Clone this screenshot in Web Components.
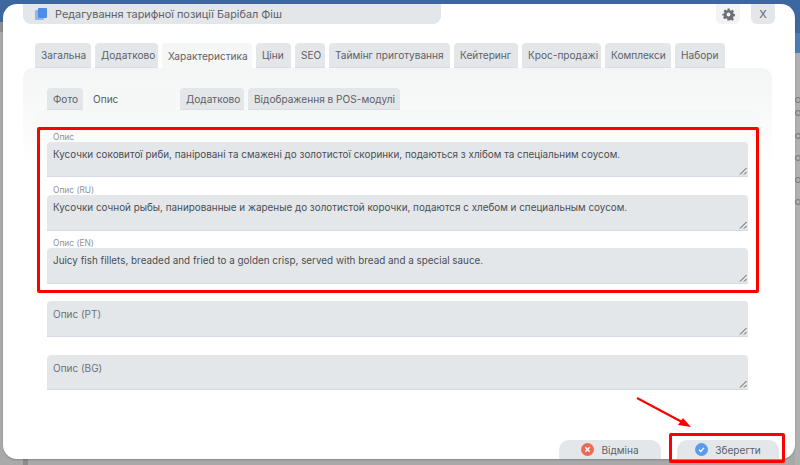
<!DOCTYPE html>
<html>
<head>
<meta charset="utf-8">
<style>
    html, body { margin: 0; height: 465px; overflow: hidden; }
    body { font-family: "Inter", "Liberation Sans", sans-serif; }
</style>
</head>
<body>
<edit-dialog></edit-dialog>

<script>
class TabButton extends HTMLElement {
    connectedCallback() {
        this.attachShadow({ mode: 'open' });
        this.shadowRoot.innerHTML = `
            <style>
                :host {
                    display: flex;
                    box-sizing: border-box;
                    align-items: center;
                    padding: 0 6px;
                    background: #e4e7ea;
                    border-bottom: 1px solid #d8dee4;
                    border-radius: 4px 4px 0 0;
                    color: #5d6168;
                    font-size: 10.1px;
                    white-space: nowrap;
                }
                :host([active]) {
                    background: #f5f6f6;
                    border-bottom: 0;
                }
            </style>
            <slot></slot>
        `;
    }
}

class DescField extends HTMLElement {
    connectedCallback() {
        this.attachShadow({ mode: 'open' });
        const label = this.getAttribute('label');
        const value = this.getAttribute('value');
        this.shadowRoot.innerHTML = `
            <style>
                :host { display: block; }
                .small {
                    height: 11px;
                    padding-left: 6px;
                    font-size: 8.4px;
                    line-height: 12px;
                    color: #8d9196;
                }
                .box {
                    position: relative;
                    box-sizing: border-box;
                    height: var(--box-h, 36px);
                    padding: 6px 6px;
                    background: #e4e7ea;
                    border-bottom: 1px solid #d3dae2;
                    border-radius: 4px 4px 0 0;
                    font-size: 9.9px;
                    line-height: 13px;
                    color: #4a4e54;
                }
                .box.empty { padding-top: 7px; font-size: 10px; color: #6c7076; }
                svg { position: absolute; right: 1px; bottom: 1px; }
            </style>
            ${value ? `<div class="small">${label}</div>` : ''}
            <div class="box ${value ? '' : 'empty'}">
                ${value || label}
                <svg width="8" height="8" viewBox="0 0 8 8" fill="none" stroke="#555" stroke-width="1">
                    <path d="M1 7.5 L7.5 1 M5 7.5 L7.5 5"/>
                </svg>
            </div>
        `;
    }
}

class FootButton extends HTMLElement {
    connectedCallback() {
        this.attachShadow({ mode: 'open' });
        this.shadowRoot.innerHTML = `
            <style>
                :host {
                    display: flex;
                    box-sizing: border-box;
                    width: 102px;
                    height: 19px;
                    align-items: center;
                    justify-content: center;
                    gap: 7px;
                    background: #e4e7ea;
                    border-radius: 10px 10px 0 0;
                    color: #5d6168;
                    font-size: 10.1px;
                }
                ::slotted(svg) { display: block; }
            </style>
            <slot name="icon"></slot>
            <slot></slot>
        `;
    }
}

class EditDialog extends HTMLElement {
    connectedCallback() {
        this.attachShadow({ mode: 'open' });
        this.shadowRoot.innerHTML = `
            <style>
                :host {
                    display: block;
                    position: relative;
                    width: 800px;
                    height: 465px;
                    overflow: hidden;
                    background: #a9a9a9;
                }
                /* page behind the modal, only its edges show */
                .back { position: absolute; }
                .dot {
                    position: absolute;
                    left: 795px;
                    width: 6px;
                    height: 6px;
                    box-sizing: border-box;
                    border: 1px solid #77736c;
                    border-radius: 50%;
                }
                .outer { position: relative; padding-top: 4px; height: 461px; }
                .modal {
                    box-sizing: border-box;
                    width: 792px;
                    height: 455px;
                    margin-left: 3px;
                    padding: 0 19px;
                    display: flex;
                    flex-direction: column;
                    background: #fff;
                    border-radius: 14px;
                    box-shadow: 0 1px 2px rgba(0, 0, 0, 0.2);
                }
                .head { display: flex; height: 20px; margin-left: 1px; }
                .title {
                    width: 418px;
                    display: flex;
                    align-items: center;
                    gap: 8px;
                    box-sizing: border-box;
                    padding-left: 12px;
                    background: #e4e7ea;
                    border-radius: 0 0 8px 8px;
                    color: #5d6168;
                    font-size: 10.9px;
                }
                .square {
                    width: 24px;
                    display: flex;
                    align-items: center;
                    justify-content: center;
                    border-radius: 0 0 6px 6px;
                    color: #5d6168;
                    font-size: 11px;
                }
                .gear { margin-left: 275px; background: #f2f3f4; }
                .close { margin-left: 11px; background: #e4e7ea; }
                .tabs {
                    display: flex;
                    gap: 4px;
                    height: 25px;
                    margin: 19px 0 0 13px;
                }
                .panel {
                    width: 749px;
                    flex: 1;
                    min-height: 0;
                    box-sizing: border-box;
                    margin-left: 1px;
                    padding: 20px 12px 0;
                    background: linear-gradient(#f4f5f5, #fff 100px);
                    border-radius: 10px 10px 0 0;
                }
                .subtabs { display: flex; gap: 4px; height: 22px; margin-left: 12px; }
                .inner {
                    box-sizing: border-box;
                    width: 725px;
                    height: 290px;
                    padding: 21px 12px 0;
                    background: linear-gradient(#f6f7f7, #fff 60px);
                    border-radius: 8px 8px 0 0;
                }
                desc-field { width: 701px; }
                .f1, .f5 { --box-h: 35px; }
                .f2 { margin-top: 7px; }
                .f3 { margin-top: 6px; }
                .f4 { margin-top: 17px; }
                .f5 { margin-top: 18px; }
                .foot {
                    display: flex;
                    justify-content: flex-end;
                    gap: 16px;
                    margin-right: -3px;
                }
                .frame {
                    position: absolute;
                    box-sizing: border-box;
                    border: 3px solid #f00;
                    border-radius: 2px;
                }
                .arrow { position: absolute; left: 630px; top: 392px; }
            </style>
            <div class="back" style="left:0;top:0;width:800px;height:22px;background:#3d689f"></div>
            <div class="back" style="left:0;top:22px;width:3px;height:10px;background:#8f8f8f"></div>
            <div class="back" style="left:795px;top:33px;width:5px;height:20px;background:#4d7bb5"></div>
            <div class="back" style="left:795px;top:53px;width:5px;height:412px;background:#b0b0b0"></div>
            <div class="back" style="left:23px;top:459px;width:5px;height:6px;background:#8c8c8c"></div>
            <div class="back" style="left:795px;top:0;width:5px;height:33px;background:#3d689f"></div>
            <div class="dot" style="top:97px"></div>
            <div class="dot" style="top:110px"></div>
            <div class="dot" style="top:133px"></div>
            <div class="dot" style="top:155px"></div>
            <div class="dot" style="top:177px"></div>
            <div class="dot" style="top:199px"></div>
            <div class="outer">
            <div class="modal">
                <div class="head">
                    <div class="title">
                        <svg width="12" height="12" viewBox="0 0 12 12">
                            <rect x="0" y="2" width="9" height="10" rx="1" fill="#8fb6ef"/>
                            <rect x="3" y="0" width="9" height="10" rx="1" fill="#4f8ce6"/>
                        </svg>
                        Редагування тарифної позиції Барібал Фіш
                    </div>
                    <div class="square gear">
                        <svg width="13" height="13" viewBox="0 0 24 24" fill="#6b7078">
                            <path fill-rule="evenodd" d="M10 1h4l.6 3.200 2 .8L19.300 3.200l2.800 2.800-1.800 2.700.8 2 3.100.6v4l-3.100.6-.8 2 1.800 2.700-2.800 2.800-2.700-1.800-2 .8L14 23h-4l-.6-3.200-2-.8-2.700 1.800-2.800-2.800 1.800-2.700-.8-2L.8 14.700v-4l3.100-.6.8-2L2.900 5.400l2.800-2.800 2.700 1.800 2-.8zM12 8.500a3.500 3.500 0 1 0 0 7 3.500 3.500 0 0 0 0-7z"/>
                        </svg>
                    </div>
                    <div class="square close">X</div>
                </div>
                <div class="tabs">
                    <tab-button style="width:56px">Загальна</tab-button>
                    <tab-button style="width:63px">Додатково</tab-button>
                    <tab-button style="width:90px" active>Характеристика</tab-button>
                    <tab-button style="width:35px">Ціни</tab-button>
                    <tab-button style="width:30px">SEO</tab-button>
                    <tab-button style="width:121px">Таймінг приготування</tab-button>
                    <tab-button style="width:64px">Кейтеринг</tab-button>
                    <tab-button style="width:79px">Крос-продажі</tab-button>
                    <tab-button style="width:66px">Комплекси</tab-button>
                    <tab-button style="width:50px">Набори</tab-button>
                </div>
                <div class="panel">
                    <div class="subtabs">
                        <tab-button style="width:36px">Фото</tab-button>
                        <tab-button style="width:89px" active>Опис</tab-button>
                        <tab-button style="width:64px">Додатково</tab-button>
                        <tab-button style="width:152px">Відображення в POS-модулі</tab-button>
                    </div>
                    <div class="inner">
                        <desc-field class="f1" label="Опис" value="Кусочки соковитої риби, паніровані та смажені до золотистої скоринки, подаються з хлібом та спеціальним соусом."></desc-field>
                        <desc-field class="f2" label="Опис (RU)" value="Кусочки сочной рыбы, панированные и жареные до золотистой корочки, подаются с хлебом и специальным соусом."></desc-field>
                        <desc-field class="f3" label="Опис (EN)" value="Juicy fish fillets, breaded and fried to a golden crisp, served with bread and a special sauce."></desc-field>
                        <desc-field class="f4" label="Опис (PT)"></desc-field>
                        <desc-field class="f5" label="Опис (BG)"></desc-field>
                    </div>
                </div>
                <div class="foot">
                    <foot-button>
                        <svg slot="icon" width="13" height="13" viewBox="0 0 13 13">
                            <circle cx="6.500" cy="6.500" r="6.500" fill="#ee6a58"/>
                            <path d="M4.300 4.300l4.400 4.400M8.700 4.300l-4.400 4.400" stroke="#fff" stroke-width="1.400"/>
                        </svg>
                        Відміна
                    </foot-button>
                    <foot-button>
                        <svg slot="icon" width="13" height="13" viewBox="0 0 13 13">
                            <circle cx="6.500" cy="6.500" r="6.500" fill="#5b9bec"/>
                            <path d="M4 6.800l1.800 1.700 3.200-3.600" stroke="#fff" stroke-width="1.300" fill="none"/>
                        </svg>
                        Зберегти
                    </foot-button>
                </div>
            </div>
            </div>
            <div class="frame" style="left:37px;top:127px;width:722px;height:166px"></div>
            <div class="frame" style="left:669px;top:433px;width:116px;height:30px"></div>
            <svg class="arrow" width="70" height="42" viewBox="0 0 70 42">
                <path d="M7 6 L52 30" stroke="#f00" stroke-width="2"/>
                <path d="M61 35 L48 33 L53 26z" fill="#f00"/>
            </svg>
        `;
    }
}

customElements.define('tab-button', TabButton);
customElements.define('desc-field', DescField);
customElements.define('foot-button', FootButton);
customElements.define('edit-dialog', EditDialog);
</script>
</body>
</html>
